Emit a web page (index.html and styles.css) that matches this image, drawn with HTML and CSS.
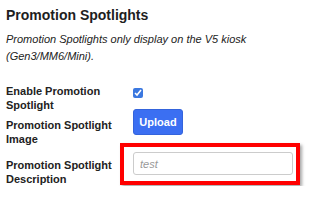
FILE: index.html
```html
<!DOCTYPE html>
<html lang="en">
<head>
    <meta charset="UTF-8">
    <meta name="viewport" content="width=device-width, initial-scale=1.0">
    <title>Promotion Spotlights</title>
    <link rel="stylesheet" href="styles.css">
</head>
<body>
    <!-- Promotion spotlight settings -->
    <section class="settings">
        <h2>Promotion Spotlights</h2>
        <p class="note">Promotion Spotlights only display on the V5 kiosk (Gen3/MM6/Mini).</p>

        <div class="form-grid">
            <label class="form-label" for="enableSpotlight">Enable Promotion Spotlight</label>
            <div class="form-control">
                <input type="checkbox" id="enableSpotlight" checked>
            </div>

            <label class="form-label label-image">Promotion Spotlight Image</label>
            <div class="form-control">
                <button class="btn-upload">Upload</button>
            </div>

            <label class="form-label label-desc" for="spotlightDesc">Promotion Spotlight Description</label>
            <div class="form-control">
                <input type="text" id="spotlightDesc" class="text-input" placeholder="test">
            </div>
        </div>

        <!-- Destaque em vermelho em volta do campo de descrição -->
        <div class="highlight"></div>
    </section>
</body>
</html>
```

FILE: styles.css
```css
body {
    font-family: "Liberation Sans", Arial, sans-serif;
    background-color: #fff;
    color: #222;
    margin: 0;
    padding: 0;
}
.settings {
    position: relative;
    padding: 7px 6px 0 6px;
}
h2 {
    font-size: 14px;
    font-weight: bold;
    margin: 0;
    line-height: 16px;
    color: #1e1e1e;
}
.note {
    font-size: 11px;
    font-style: italic;
    line-height: 16.5px;
    margin: 8px 0 0 0;
    color: #222;
}
/* Grade do formulário */
.form-grid {
    display: grid;
    grid-template-columns: 127px 1fr;
    grid-template-rows: 25px 43px auto;
    margin-top: 20px;
}
.form-label {
    font-size: 11px;
    font-weight: bold;
    line-height: 14px;
    color: #222;
}
.label-image {
    padding-top: 9px;
}
.label-desc {
    padding-top: 6px;
}
.form-control input[type="checkbox"] {
    width: 10px;
    height: 10px;
    margin: 0;
    accent-color: #3b78e0;
}
.btn-upload {
    font-family: "Liberation Sans", Arial, sans-serif;
    background-color: #3b6ff2;
    color: #fff;
    font-size: 11px;
    font-weight: bold;
    height: 26px;
    width: 50px;
    padding: 0;
    border: 1px solid #3464dc;
    border-radius: 3px;
    cursor: pointer;
}
.text-input {
    font-family: "Liberation Sans", Arial, sans-serif;
    box-sizing: border-box;
    width: 160px;
    height: 23px;
    padding: 0 6px;
    border: 1px solid #ccc;
    border-radius: 3px;
    font-size: 11px;
    margin: 0;
}
.text-input::placeholder {
    color: #999;
    font-style: italic;
}
.highlight {
    position: absolute;
    left: 120px;
    top: 143px;
    width: 180px;
    height: 42px;
    box-sizing: border-box;
    border: 4px solid #f00;
    box-shadow: 2px 2px 3px rgba(0, 0, 0, 0.35);
    pointer-events: none;
}
```
